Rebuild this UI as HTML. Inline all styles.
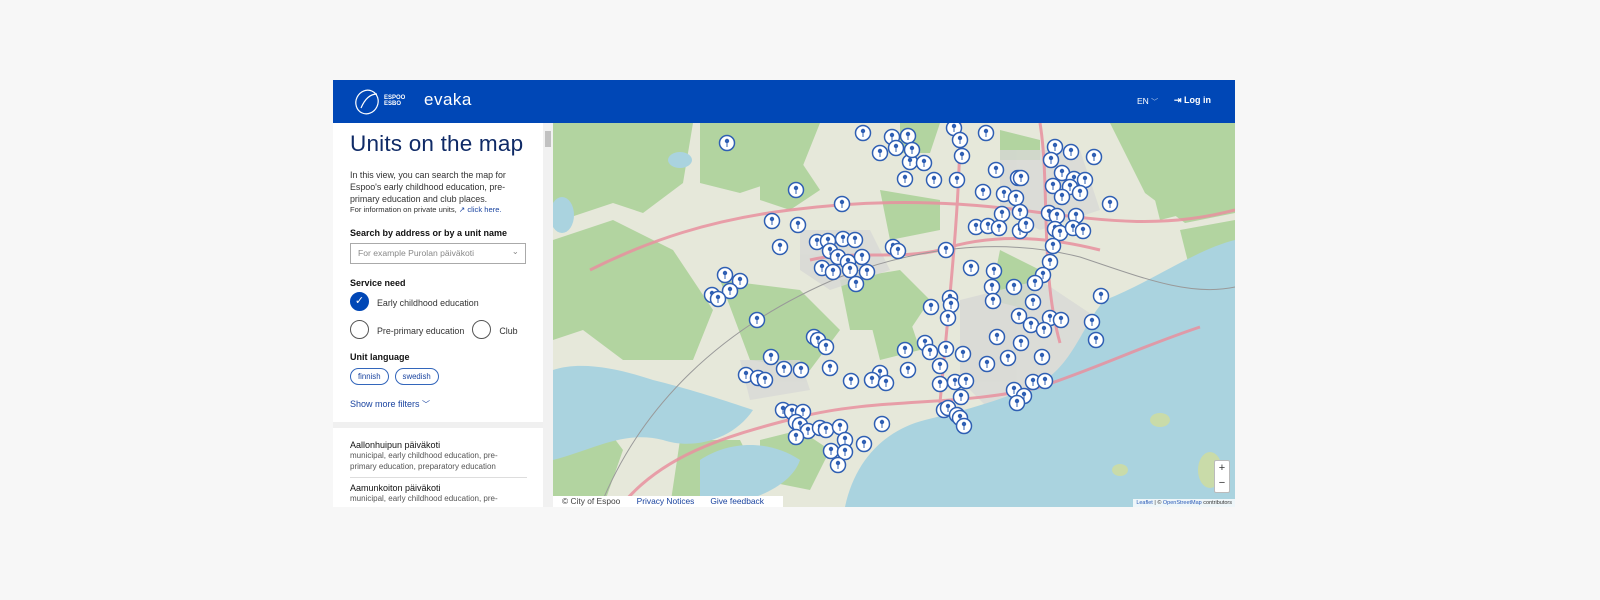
<!DOCTYPE html>
<html><head><meta charset="utf-8"><style>
*{box-sizing:border-box;margin:0;padding:0}
body{width:1600px;height:600px;background:#f7f7f7;font-family:"Liberation Sans",sans-serif;position:relative;overflow:hidden}
.hdr{position:absolute;left:333px;top:80px;width:902px;height:43px;background:#0047b6;color:#fff}
.side{position:absolute;left:333px;top:123px;width:220px;height:384px;background:#f0f0f0;overflow:hidden}
.p1{position:absolute;left:0;top:0;width:210px;height:299px;background:#fff;padding:0 17px}
.p2{position:absolute;left:0;top:305px;width:210px;height:90px;background:#fff;padding:0 17px}
.sb{position:absolute;left:210px;top:0;width:10px;height:384px;background:#f1f1f1}
h1{font-weight:400;font-size:22.5px;color:#0f2a66;margin-top:8px;letter-spacing:.2px}
.t{font-size:8.9px;color:#333;line-height:12px}
.lbl{font-size:9px;color:#111;font-weight:600}
.chk{display:inline-block;width:19px;height:19px;border-radius:50%;border:1px solid #555;vertical-align:middle}
.chip{display:inline-block;border:1px solid #3366bb;border-radius:10px;font-size:7.8px;color:#1a44a0;padding:3px 7px;margin-right:6px}
.map{position:absolute;left:553px;top:123px;width:682px;height:384px;overflow:hidden;background:#e6e9dc}
</style></head><body>
<div class="hdr">
 <svg style="position:absolute;left:20px;top:8px" width="30" height="28" viewBox="0 0 30 28"><ellipse cx="14" cy="14" rx="11" ry="12" fill="none" stroke="#fff" stroke-width="1.2" transform="rotate(25 14 14)"/><path d="M8 20 Q14 6 24 6" fill="none" stroke="#fff" stroke-width="1.2"/></svg>
 <div style="position:absolute;left:51px;top:15px;font-size:6px;font-weight:700;line-height:6px">ESPOO<br>ESBO</div>
 <div style="position:absolute;left:91px;top:10px;font-size:17px;letter-spacing:.5px">evaka</div>
 <div style="position:absolute;left:804px;top:16px;font-size:8.5px">EN <span style="font-size:7px;opacity:.7">﹀</span></div>
 <div style="position:absolute;left:841px;top:15px;font-size:9px;font-weight:700">⇥ Log in</div>
</div>
<div class="side">
 <div class="p1">
  <h1>Units on the map</h1>
  <div class="t" style="margin-top:12px;padding-right:8px">In this view, you can search the map for Espoo's early childhood education, pre-primary education and club places.</div>
  <div class="t" style="font-size:7.6px;line-height:9px;white-space:nowrap">For information on private units, <span style="color:#1a44a0">↗ click here.</span></div>
  <div class="lbl" style="margin-top:14px">Search by address or by a unit name</div>
  <div style="margin-top:5px;width:176px;height:21px;border:1px solid #aaa;font-size:8.6px;color:#888;padding:4px 7px;position:relative">For example Purolan päiväkoti<span style="position:absolute;right:6px;top:2px">⌄</span></div>
  <div class="lbl" style="margin-top:14px">Service need</div>
  <div style="margin-top:4px"><span class="chk" style="background:#0047b6;border-color:#0047b6;color:#fff;font-size:11px;text-align:center;line-height:17px">✓</span><span class="t" style="margin-left:8px">Early childhood education</span></div>
  <div style="margin-top:9px"><span class="chk"></span><span class="t" style="margin-left:8px">Pre-primary education</span><span class="chk" style="margin-left:8px"></span><span class="t" style="margin-left:8px">Club</span></div>
  <div class="lbl" style="margin-top:13px">Unit language</div>
  <div style="margin-top:4px"><span class="chip">finnish</span><span class="chip">swedish</span></div>
  <div style="margin-top:14px;font-size:9px;color:#1a44a0">Show more filters <span style="font-size:8px">﹀</span></div>
 </div>
 <div class="p2">
  <div class="lbl" style="margin-top:12px;font-weight:500;font-size:9px">Aallonhuipun päiväkoti</div>
  <div class="t" style="color:#555;font-size:8px;line-height:11px;padding-right:10px">municipal, early childhood education, pre-primary education, preparatory education</div>
  <div style="border-top:1px solid #ddd;width:177px;margin-top:5px"></div>
  <div class="lbl" style="margin-top:5px;font-weight:500;font-size:9px">Aamunkoiton päiväkoti</div>
  <div class="t" style="color:#555;font-size:8px;line-height:11px">municipal, early childhood education, pre-</div>
 </div>
 <div class="sb"><div style="position:absolute;left:2px;top:8px;width:6px;height:16px;background:#c1c1c1"></div></div>
</div>
<div class="map">
<svg width="682" height="384" viewBox="553 123 682 384">
 <rect x="553" y="123" width="682" height="384" fill="#e6e8da"/>
 <g fill="#b2d4a0">
  <path d="M553 123h140l-10 60 -40 30 -30 -10 -60 20z"/>
  <path d="M700 123h120l-20 50 -60 20 -40 -10z"/>
  <path d="M553 240l60 -20 60 30 40 60 -20 50 -70 0 -40 -30 -30 10z"/>
  <path d="M720 280l80 10 40 40 -30 40 -60 -10z"/>
  <path d="M840 280l60 -10 30 30 -20 30 -60 0z"/>
  <path d="M1110 123h125v90l-50 10 -40 -30z"/>
  <path d="M900 123h40l-10 30 -30 0z"/>
  <path d="M1180 230l55 -10v60l-40 10z"/>
  <path d="M553 420l40 -10 30 40 -20 57h-50z"/>
  <path d="M680 440l60 0 20 40 -40 27h-50z"/>
  <path d="M880 190l60 10 0 30 -50 10z"/>
  <path d="M1000 250l40 20 -10 40 -40 -10z"/>
  <path d="M760 170l40 -10 20 30 -30 20 -30 -10z"/>
  <path d="M640 300l40 -20 20 30 -20 30 -40 -10z"/>
  <path d="M870 320l40 0 10 30 -40 10z"/>
  <path d="M1120 300l40 -10 10 40 -40 10z"/>
  <path d="M1150 180l40 0 10 30 -40 10z"/>
  <path d="M1000 130l40 10 0 20 -40 0z"/>
  <path d="M760 440l40 -10 30 20 -20 40 -50 -10z"/>
 </g>
 <g fill="#d8d8d6" opacity=".8">
  <path d="M960 300l80 -20 60 40 -20 80 -80 20 -40 -40z"/>
  <path d="M800 230l70 0 20 40 -60 20 -30 -20z"/>
  <path d="M1000 150l80 0 20 60 -60 20 -40 -20z"/>
  <path d="M740 360l60 0 10 30 -60 10z"/>
 </g>
 <g fill="#aad3df">
  <path d="M1235 240c-40 10 -80 40 -130 60 -20 20 -30 60 -60 80 -40 20 -80 30 -120 40 -40 10 -70 40 -80 87h390z"/>
  <path d="M553 370c30 -10 70 0 100 10 40 10 70 20 100 30 -20 30 -60 40 -90 30 -40 -10 -70 10 -110 20z"/>
  <path d="M700 460c30 -20 70 -20 100 0 -10 30 -60 47 -100 47z"/>
  <ellipse cx="562" cy="215" rx="12" ry="18"/>
  <ellipse cx="680" cy="160" rx="12" ry="8"/>
 </g>
 <g fill="#c9dba9"><ellipse cx="1210" cy="470" rx="12" ry="18"/><ellipse cx="1160" cy="420" rx="10" ry="7"/><ellipse cx="1120" cy="470" rx="8" ry="6"/></g>
 <g fill="none" stroke="#e8919f" stroke-width="3" opacity=".85">
  <path d="M590 270c60 -30 120 -50 200 -60 80 -10 150 -10 230 0 80 10 140 20 215 0"/>
  <path d="M620 507c40 -50 100 -70 180 -90 80 -20 160 -10 240 -30 60 -20 100 -40 160 -60"/>
  <path d="M810 260c40 -10 90 0 130 -10 60 -20 120 -10 160 0"/>
  <path d="M960 123c0 80 -10 170 -20 280"/>
  <path d="M1040 123c10 60 0 150 20 220"/>
 </g>
 <g fill="none" stroke="#999" stroke-width="1"><path d="M600 507c40 -100 120 -180 240 -230 80 -30 160 -40 240 -20 60 20 110 40 155 30"/></g>
 <g id="m" fill="#fff" stroke="#2f5fb3" stroke-width="1.5">
 </g>
</svg>
<div style="position:absolute;right:5px;bottom:14px;width:16px;height:33px;background:#fff;border:1px solid #bbb;border-radius:2px;font-size:11px;text-align:center;line-height:15px;color:#333">+<br>−</div>
<div style="position:absolute;right:0;bottom:0;background:rgba(255,255,255,.8);font-size:5.5px;padding:1px 3px;color:#333"><span style="color:#2a5ab8">Leaflet</span> | © <span style="color:#2a5ab8">OpenStreetMap</span> contributors</div>
<div style="position:absolute;left:0;bottom:0;width:230px;height:11px;background:#fff;font-size:8.4px;color:#444;line-height:11px;padding-left:9px;white-space:nowrap">© City of Espoo <span style="color:#1a44a0;margin-left:14px">Privacy Notices</span><span style="color:#1a44a0;margin-left:16px">Give feedback</span></div>
</div>
<script>
var P=[[727,143],[863,133],[892,137],[908,136],[880,153],[896,148],[910,162],[924,163],[912,150],[954,128],[960,140],[986,133],[962,156],[905,179],[934,180],[957,180],[996,170],[1018,178],[1021,178],[1055,147],[1071,152],[1094,157],[1051,160],[1062,173],[1074,179],[1085,180],[1053,186],[1070,187],[1062,197],[1080,193],[1110,204],[796,190],[842,204],[983,192],[1004,194],[1016,198],[1002,214],[1020,212],[1049,213],[1057,216],[1076,216],[976,227],[988,226],[999,228],[1020,231],[1026,225],[1055,229],[1060,233],[1073,228],[1083,231],[1053,246],[1050,262],[1043,275],[1035,283],[772,221],[798,225],[780,247],[817,242],[828,241],[843,239],[855,240],[830,251],[838,257],[848,262],[862,257],[893,247],[898,251],[946,250],[822,268],[833,272],[850,270],[867,272],[856,284],[725,275],[740,281],[730,291],[712,295],[718,299],[971,268],[994,271],[992,287],[1014,287],[993,301],[1033,302],[1101,296],[950,298],[951,305],[931,307],[948,318],[757,320],[1019,316],[1031,325],[1050,318],[1061,320],[1044,330],[1092,322],[1096,340],[814,337],[818,340],[826,347],[905,350],[925,343],[930,352],[946,349],[963,354],[997,337],[1021,343],[771,357],[784,369],[801,370],[830,368],[880,373],[908,370],[940,366],[987,364],[1008,358],[1042,357],[746,375],[758,378],[765,380],[851,381],[872,380],[886,383],[940,384],[955,382],[966,381],[1033,382],[1045,381],[1014,390],[1024,396],[1017,403],[961,397],[783,410],[792,412],[803,412],[944,410],[948,408],[957,415],[960,418],[964,426],[882,424],[796,422],[800,425],[808,431],[820,428],[826,430],[840,427],[845,440],[864,444],[831,451],[845,452],[838,465],[796,437]];
var g=document.getElementById('m'),s='';
P.forEach(function(p){var x=p[0],y=p[1];s+='<circle cx="'+x+'" cy="'+y+'" r="7.5"/><line x1="'+x+'" y1="'+(y-1)+'" x2="'+x+'" y2="'+(y+4)+'" stroke-width="1"/><circle cx="'+x+'" cy="'+(y-2)+'" r="2.2" fill="#2f5fb3" stroke="none"/>';});
g.innerHTML=s;
</script>
</body></html>
